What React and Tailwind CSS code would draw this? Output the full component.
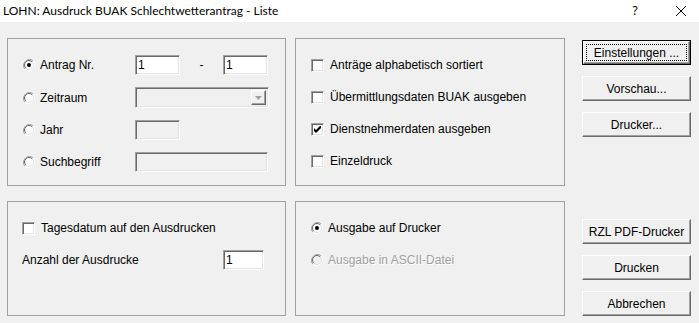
import { useState } from 'react';

const font = { fontFamily: '"Liberation Sans", Arial, sans-serif' };

function GroupBox({ className = '', children }) {
    return (
        <div className={`border border-[#a0a0a0] ${className}`}>
            {children}
        </div>
    );
}

function Radio({ checked, disabled, label }) {
    return (
        <div className="flex items-center h-5">
            <svg width="12" height="12" viewBox="0 0 12 12" className="shrink-0">
                <path d="M10.2 1.8A6 6 0 0 0 1.8 10.2" fill="none" stroke="#a0a0a0" strokeWidth="1" />
                <path d="M1.8 10.2A6 6 0 0 0 10.2 1.8" fill="none" stroke="#ffffff" strokeWidth="1" />
                <circle cx="6" cy="6" r="4.5" fill={disabled ? '#f0f0f0' : '#ffffff'} stroke="#e3e3e3" strokeWidth="1" />
                <path d="M9.2 2.8A4.5 4.5 0 0 0 2.8 9.2" fill="none" stroke="#696969" strokeWidth="1" />
                {checked && <circle cx="6" cy="6" r="2" fill="#000" />}
            </svg>
            <span
                className={`ml-[5px] text-[12px] leading-none ${disabled ? 'text-[#a0a0a0] [text-shadow:1px_1px_0_#ffffff]' : 'text-black'}`}
            >
                {label}
            </span>
        </div>
    );
}

function Checkbox({ checked, label }) {
    return (
        <div className="flex items-center h-5">
            <div className="w-[13px] h-[13px] shrink-0 bg-white border border-t-[#a0a0a0] border-l-[#a0a0a0] border-b-white border-r-white shadow-[inset_1px_1px_0_#696969,inset_-1px_-1px_0_#e3e3e3] flex items-center justify-center">
                {checked && (
                    <svg width="7" height="7" viewBox="0 0 7 7">
                        <path d="M0 2v3l2 2 5-5V-1L2 4z" fill="#000" />
                    </svg>
                )}
            </div>
            <span className="ml-[6px] text-[12px] leading-none text-black">{label}</span>
        </div>
    );
}

function TextBox({ value = '', className = '', disabled }) {
    return (
        <div className={`h-5 border border-t-[#a0a0a0] border-l-[#a0a0a0] border-b-white border-r-white shadow-[inset_1px_1px_0_#696969,inset_-1px_-1px_0_#e3e3e3] ${disabled ? 'bg-[#f0f0f0]' : 'bg-white'} flex items-center pl-[2px] text-[12px] ${className}`}>
            {value}
        </div>
    );
}

function ComboBox() {
    return (
        <div className="h-[21px] w-[134px] border border-t-[#a0a0a0] border-l-[#a0a0a0] border-b-white border-r-white shadow-[inset_1px_1px_0_#696969,inset_-1px_-1px_0_#e3e3e3] bg-[#f0f0f0] flex justify-end p-[2px]">
            <div className="w-[15px] h-full border border-t-white border-l-white border-b-[#696969] border-r-[#696969] shadow-[inset_-1px_-1px_0_#a0a0a0] flex items-center justify-center">
                <svg width="7" height="4" viewBox="0 0 7 4">
                    <path d="M0 0h7L3.5 4z" fill="#a0a0a0" />
                </svg>
            </div>
        </div>
    );
}

function Button({ children, isDefault }) {
    if (isDefault) {
        return (
            <div className="h-[25px] w-[109px] border border-black">
                <div className="h-full w-full border border-t-white border-l-white border-b-[#696969] border-r-[#696969] shadow-[inset_-1px_-1px_0_#a0a0a0] bg-[#f0f0f0] p-[2px]">
                    <div className="h-full w-full border border-dotted border-black flex items-center justify-center text-[12px]">
                        {children}
                    </div>
                </div>
            </div>
        );
    }
    return (
        <div className="h-[25px] w-[109px] border border-t-white border-l-white border-b-[#696969] border-r-[#696969] shadow-[inset_-1px_-1px_0_#a0a0a0] bg-[#f0f0f0] flex items-center justify-center text-[12px]">
            {children}
        </div>
    );
}

export default function App() {
    const [mode] = useState('antrag');

    return (
        <div className="w-[699px] h-[323px] bg-[#f0f0f0] overflow-hidden text-black" style={font}>
            {/* Title bar */}
            <div className="h-[22px] bg-white flex items-center justify-between">
                <span className="pl-[3px] text-[12px]" style={{ fontFamily: 'Lato, "Noto Sans", sans-serif' }}>
                    LOHN: Ausdruck BUAK Schlechtwetterantrag - Liste
                </span>
                <div className="flex items-center">
                    <span className="text-[12px] w-[10px] text-center mr-[36px]" style={{ fontFamily: '"Noto Sans", sans-serif' }}>?</span>
                    <svg width="10" height="10" viewBox="0 0 10 10" className="mr-[13px]">
                        <path d="M0 0L10 10M10 0L0 10" stroke="#000" strokeWidth="1" />
                    </svg>
                </div>
            </div>

            <div className="pt-[16px] pl-[7px] grid grid-cols-[279px_279px_109px] grid-rows-[148px_115px] gap-y-[15px]">
                {/* Auswahl */}
                <GroupBox className="pt-[16px] pl-[15px] flex flex-col gap-[12px]">
                    <div className="flex items-center">
                        <div className="w-[112px]"><Radio checked={mode === 'antrag'} label="Antrag Nr." /></div>
                        <TextBox value="1" className="w-[45px]" />
                        <span className="w-[43px] text-center text-[12px]">-</span>
                        <TextBox value="1" className="w-[45px]" />
                    </div>
                    <div className="flex items-center">
                        <div className="w-[112px]"><Radio label="Zeitraum" /></div>
                        <ComboBox />
                    </div>
                    <div className="flex items-center">
                        <div className="w-[112px]"><Radio label="Jahr" /></div>
                        <TextBox disabled className="w-[45px]" />
                    </div>
                    <div className="flex items-center">
                        <div className="w-[112px]"><Radio label="Suchbegriff" /></div>
                        <TextBox disabled className="w-[133px]" />
                    </div>
                </GroupBox>

                {/* Optionen */}
                <GroupBox className="ml-[9px] pt-[16px] pl-[15px] flex flex-col gap-[12px]">
                    <Checkbox label="Anträge alphabetisch sortiert" />
                    <Checkbox label="Übermittlungsdaten BUAK ausgeben" />
                    <Checkbox checked label="Dienstnehmerdaten ausgeben" />
                    <Checkbox label="Einzeldruck" />
                </GroupBox>

                <div className="ml-[17px] pt-[2px] flex flex-col gap-[11px]">
                    <Button isDefault>Einstellungen ...</Button>
                    <Button>Vorschau...</Button>
                    <Button>Drucker...</Button>
                </div>

                {/* Ausdruck */}
                <GroupBox className="pt-[16px] pl-[14px] pr-[21px] flex flex-col gap-[12px]">
                    <Checkbox label="Tagesdatum auf den Ausdrucken" />
                    <div className="flex items-center justify-between">
                        <span className="text-[12px]">Anzahl der Ausdrucke</span>
                        <TextBox value="1" className="w-[41px]" />
                    </div>
                </GroupBox>

                {/* Ausgabe */}
                <GroupBox className="ml-[9px] pt-[16px] pl-[15px] flex flex-col gap-[12px]">
                    <Radio checked label="Ausgabe auf Drucker" />
                    <Radio disabled label="Ausgabe in ASCII-Datei" />
                </GroupBox>

                <div className="ml-[17px] flex flex-col justify-end gap-[11px]">
                    <Button>RZL PDF-Drucker</Button>
                    <Button>Drucken</Button>
                    <Button>Abbrechen</Button>
                </div>
            </div>
        </div>
    );
}
